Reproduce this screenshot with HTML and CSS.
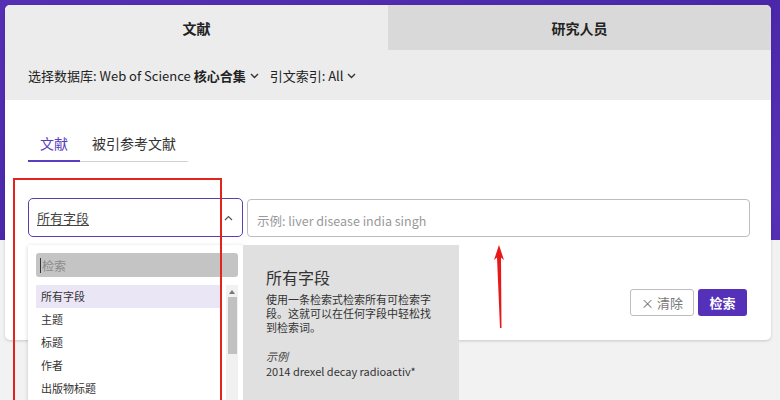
FILE: index.html
```html
<!DOCTYPE html>
<html lang="zh">
<head>
<meta charset="utf-8">
<link rel="stylesheet" href="styles.css">
</head>
<body>
<div class="page">
  <div class="card">
    <div class="tabs">
      <div class="tab active">文献</div>
      <div class="tab">研究人员</div>
    </div>
    <div class="dbrow">
      <span>选择数据库: Web of Science <b>核心合集</b></span>
      <svg class="chev" width="9" height="6" viewBox="0 0 9 6"><path d="M1 1l3.5 3.5L8 1" fill="none" stroke="#333" stroke-width="1.4"/></svg>
      <span class="idx">引文索引: All</span>
      <svg class="chev" width="9" height="6" viewBox="0 0 9 6"><path d="M1 1l3.5 3.5L8 1" fill="none" stroke="#333" stroke-width="1.4"/></svg>
    </div>
    <div class="body">
      <div class="subtabs">
        <div class="subtab on">文献</div>
        <div class="subtab">被引参考文献</div>
      </div>
      <div class="formrow">
        <div class="select">
          <span class="sel-text">所有字段</span>
          <svg width="9" height="6" viewBox="0 0 9 6"><path d="M1 5l3.5-3.5L8 5" fill="none" stroke="#555" stroke-width="1.2"/></svg>
        </div>
        <div class="input">示例: liver disease india singh</div>
      </div>
      <div class="btnrow">
        <button class="clear">× 清除</button>
        <button class="go">检索</button>
      </div>
    </div>
  </div>

  <div class="dropdown">
    <div class="dd-search"><span class="cursor"></span>检索</div>
    <div class="dd-list">
      <div class="dd-items">
        <div class="dd-item sel">所有字段</div>
        <div class="dd-item">主题</div>
        <div class="dd-item">标题</div>
        <div class="dd-item">作者</div>
        <div class="dd-item">出版物标题</div>
      </div>
      <div class="scroll">
        <svg width="6" height="4" viewBox="0 0 6 4"><path d="M0 4L3 0l3 4z" fill="#777"/></svg>
        <div class="thumb"></div>
      </div>
    </div>
  </div>

  <div class="tip">
    <div class="tip-title">所有字段</div>
    <div class="tip-body">使用一条检索式检索所有可检索字段。这就可以在任何字段中轻松找到检索词。</div>
    <div class="tip-ex">示例</div>
    <div class="tip-sample">2014 drexel decay radioactiv*</div>
  </div>

  <div class="redbox"></div>
  <svg class="arrow" width="20" height="90" viewBox="0 0 20 90">
    <path d="M10 1 L15 16 L12 13.5 L12.5 84 L11 84 L8 13.5 L5 16 Z" fill="#e81818"/>
  </svg>
</div>
</body>
</html>
```

FILE: styles.css
```css
* { box-sizing: border-box; }
html, body { margin: 0; padding: 0; }
body {
  width: 780px;
  height: 400px;
  overflow: hidden;
  font-family: "Noto Sans CJK SC", "Noto Sans", sans-serif;
  color: #222;
  background: linear-gradient(to bottom, transparent 0 240px, #f2f2f2 240px),
              linear-gradient(160deg, #5530b4 0%, #4a27a8 40%, #5632b8 70%, #4524a0 100%);
}
.page { position: relative; width: 780px; height: 400px; padding-top: 5px; }
.card {
  margin-left: 5px;
  width: 766px;
  height: 335px;
  background: #fff;
  border-radius: 5px;
  overflow: hidden;
  box-shadow: 0 1px 3px rgba(0,0,0,.18);
}
.tabs { display: flex; height: 45px; }
.tab {
  flex: 1;
  display: flex;
  align-items: center;
  justify-content: center;
  font-size: 14px;
  font-weight: 700;
  color: #222;
  background: #d9d9d9;
}
.tab.active { background: #ececec; }
.dbrow {
  height: 50px;
  background: #ececec;
  display: flex;
  align-items: center;
  padding-left: 23px;
  font-size: 13px;
  color: #222;
}
.dbrow b { font-weight: 700; }
.chev { margin-left: 4px; margin-top: 1px; }
.idx { margin-left: 11px; }
.body { padding: 0 21px 0 23px; }
.subtabs {
  margin-top: 28px;
  width: 160px;
  display: flex;
  border-bottom: 1px solid #d2d2d2;
}
.subtab {
  height: 33px;
  padding: 0 12px;
  font-size: 14px;
  line-height: 30px;
  color: #333;
}
.subtab.on { color: #5b3ec0; border-bottom: 2px solid #5b3ec0; margin-bottom: -1px; height: 34px; }
.formrow { display: flex; gap: 4px; margin-top: 36px; }
.select {
  width: 215px;
  height: 39px;
  border: 1.5px solid #5b3ea8;
  border-radius: 5px;
  display: flex;
  align-items: center;
  justify-content: space-between;
  padding: 0 9px 0 8px;
  font-size: 13px;
  color: #444;
}
.sel-text { text-decoration: underline; text-underline-offset: 2px; }
.input {
  flex: 1;
  height: 38px;
  margin-top: 1px;
  border: 1px solid #bdbdbd;
  border-radius: 4px;
  display: flex;
  align-items: center;
  padding: 5px 0 0 9px;
  font-size: 12.5px;
  color: #999;
}
.btnrow { display: flex; justify-content: flex-end; gap: 4px; margin-top: 52px; margin-right: 3px; }
button {
  font-family: inherit;
  font-size: 13px;
  height: 27px;
  border-radius: 3px;
  padding: 0;
}
.clear { width: 64px; background: #fff; color: #777; border: 1px solid #bdbdbd; }
.go { width: 49px; background: #5530b8; color: #fff; border: none; font-weight: 700; }

.dropdown {
  position: absolute;
  left: 28px;
  top: 245px;
  width: 215px;
  height: 170px;
  background: #fff;
  box-shadow: 0 1px 4px rgba(0,0,0,.18);
  padding: 8px 5px 0 8px;
}
.dd-search {
  height: 24px;
  background: #c4c4c4;
  border-radius: 3px;
  display: flex;
  align-items: center;
  font-size: 12px;
  color: #8a8a8a;
  padding-left: 4px;
}
.cursor { width: 1px; height: 15px; background: #333; margin-right: 1px; }
.dd-list { display: flex; margin-top: 8px; }
.dd-items { flex: 1; }
.dd-item {
  height: 23px;
  line-height: 23px;
  padding-left: 5px;
  font-size: 11px;
  color: #333;
}
.dd-item.sel { background: #ebe6f6; }
.scroll {
  width: 12px;
  margin-left: 4px;
  height: 130px;
  background: #f1f1f1;
  display: flex;
  flex-direction: column;
  align-items: center;
  padding-top: 5px;
}
.thumb { width: 9px; height: 57px; background: #c1c1c1; margin-top: 3px; }

.tip {
  position: absolute;
  left: 243px;
  top: 245px;
  width: 216px;
  height: 160px;
  background: #e0e0e0;
  padding: 20px 20px 0 23px;
  color: #333;
}
.tip-title { font-size: 16px; line-height: 24px; }
.tip-body { font-size: 11px; line-height: 14px; margin-top: 3px; }
.tip-ex { font-size: 11px; font-style: italic; margin-top: 15px; line-height: 15px; color: #444; }
.tip-sample { font-size: 11px; line-height: 15px; color: #333; }

.redbox {
  position: absolute;
  left: 13px;
  top: 178px;
  width: 209px;
  height: 240px;
  border: 2px solid #e3241c;
}
.arrow { position: absolute; left: 489px; top: 244px; }
```
